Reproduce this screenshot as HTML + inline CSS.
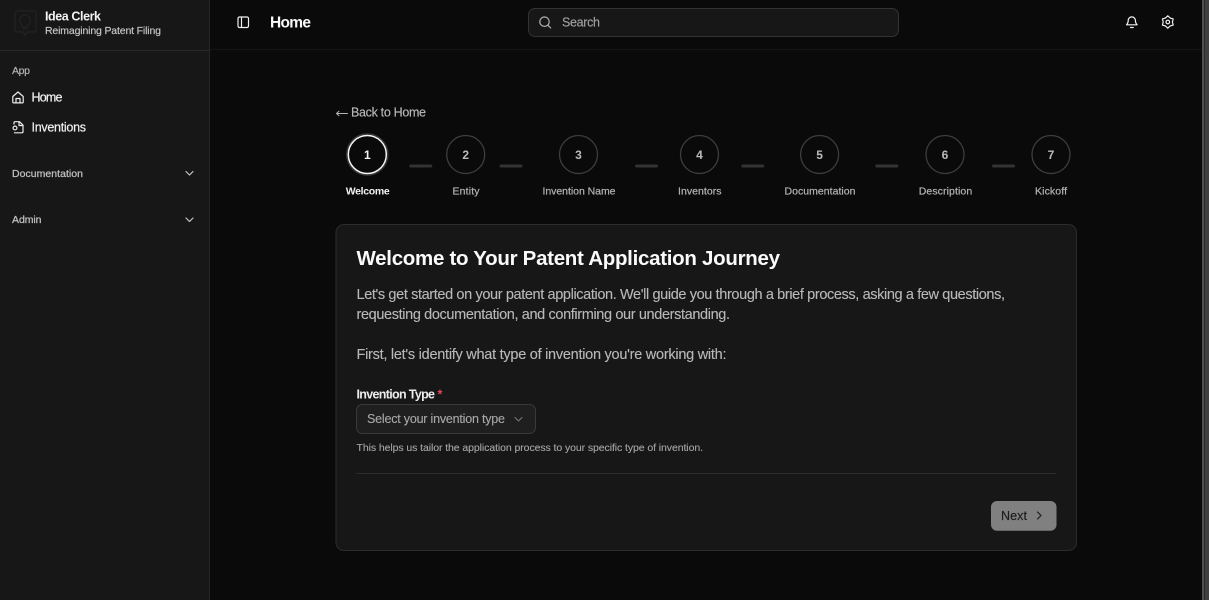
<!DOCTYPE html>
<html><head><meta charset="utf-8"><style>
html,body{margin:0;padding:0;background:#0a0a0a;width:1209px;height:600px;overflow:hidden}
svg{position:absolute;left:0;top:0;display:block}
text{font-family:"Liberation Sans",sans-serif;white-space:pre}
</style></head><body>
<svg width="1209" height="600" viewBox="0 0 1209 600" xmlns="http://www.w3.org/2000/svg">
<rect width="1209" height="600" fill="#0a0a0a"/>
<!-- sidebar -->
<rect x="0" y="0" width="209.500" height="600" fill="#171717"/>
<rect x="209" y="0" width="1" height="600" fill="#262626"/>
<rect x="0" y="50" width="209" height="1" fill="#2a2a2a"/>
<rect x="210" y="49" width="992" height="1" fill="#151515"/>
<!-- scrollbar -->
<rect x="1202" y="0" width="2" height="600" fill="#505050"/>
<rect x="1204" y="0" width="1" height="600" fill="#2a2a2a"/>
<rect x="1205" y="0" width="4" height="600" fill="#404040"/>
<!-- logo -->
<g fill="none" stroke="#232323" stroke-width="1.200">
<path d="M17 11h17a2 2 0 0 1 2 2v17a2 2 0 0 1-2 2H27l-2.500 3-1-3H17a2 2 0 0 1-2-2V13a2 2 0 0 1 2-2z"/>
<path d="M25 15a5.500 5.500 0 0 0-3 10v2h6v-2a5.500 5.500 0 0 0-3-10zM23 29h4"/>
</g>
<text x="45" y="20.500" font-size="12.500" font-weight="700" fill="#f2f2f2" textLength="56">Idea Clerk</text>
<text x="45" y="34" font-size="10.500" fill="#c8c8c8" stroke="#c8c8c8" stroke-width=".15" textLength="116">Reimagining Patent Filing</text>
<text x="12" y="74" font-size="10.500" fill="#b8b8b8" stroke="#b8b8b8" stroke-width=".15" textLength="18">App</text>
<g fill="none" stroke="#ececec" stroke-width="1.200" stroke-linecap="round" stroke-linejoin="round">
<path d="M12.800 96.500L18 92l5.200 4.500V102a.9.9 0 0 1-.9.900H13.700a.9.900 0 0 1-.9-.9z"/>
<path d="M16 102.800v-4.300h4v4.300"/>
<path d="M14 124v-1.300a1 1 0 0 1 1-1h4.500l3.500 3.500v6.600a1 1 0 0 1-1 1h-7.500"/>
<path d="M19 122v3.500h4"/>
<circle cx="15" cy="128" r="1.900"/>
</g>
<text x="31.500" y="101.500" font-size="12.500" fill="#f0f0f0" stroke="#f0f0f0" stroke-width=".2" textLength="31">Home</text>
<text x="31.500" y="131.500" font-size="12.500" fill="#f0f0f0" stroke="#f0f0f0" stroke-width=".2" textLength="54.500">Inventions</text>
<text x="12" y="177" font-size="10.500" fill="#c0c0c0" stroke="#c0c0c0" stroke-width=".25" textLength="71">Documentation</text>
<text x="12" y="223" font-size="10.500" fill="#c0c0c0" stroke="#c0c0c0" stroke-width=".25" textLength="29.500">Admin</text>
<g fill="none" stroke="#c8c8c8" stroke-width="1.200" stroke-linecap="round" stroke-linejoin="round">
<path d="M186 171.500l3.500 3.500 3.500-3.500"/>
<path d="M186 218l3.500 3.500 3.500-3.500"/>
</g>
<!-- header -->
<g fill="none" stroke="#f0f0f0" stroke-width="1.200" stroke-linejoin="round">
<rect x="238" y="17" width="10.500" height="10.500" rx="1.500"/>
<path d="M241.500 17v10.500"/>
</g>
<text x="270" y="27.500" font-size="15.500" font-weight="700" fill="#fafafa" textLength="41">Home</text>
<rect x="528.500" y="8.500" width="370" height="28" rx="6.500" fill="#171717" stroke="#333"/>
<g fill="none" stroke="#b0b0b0" stroke-width="1.200" stroke-linecap="round">
<circle cx="544.500" cy="21.700" r="4.700"/><path d="M548 25.300l2.700 2.700"/>
</g>
<text x="562" y="26.500" font-size="12.500" fill="#a0a0a0" stroke="#a0a0a0" stroke-width=".15" textLength="38">Search</text>
<g fill="none" stroke="#f0f0f0" stroke-width="1.200" stroke-linecap="round" stroke-linejoin="round">
<path d="M1126.500 24.800c1-1 1.700-2 1.700-4.300a3.600 3.600 0 0 1 7.200 0c0 2.300.7 3.300 1.700 4.300z"/>
<path d="M1130.500 27.500h2.700"/>
<path d="M1167.800 15.800l2.300 2.200 3.100.9-.8 3.100.8 3.100-3.100.9-2.300 2.200-2.300-2.200-3.100-.9.8-3.100-.8-3.100 3.100-.9z"/>
<circle cx="1167.800" cy="22" r="1.800"/>
</g>
<!-- back -->
<g fill="none" stroke="#b4b4b4" stroke-width="1" stroke-linecap="round" stroke-linejoin="round">
<path d="M336.500 113.500h11M336.500 113.500l2.500-2.200M336.500 113.500l2.500 2.200"/>
</g>
<text x="351" y="116.500" font-size="12.500" fill="#b8b8b8" stroke="#b8b8b8" stroke-width=".15" textLength="75">Back to Home</text>
<!-- stepper -->
<g fill="none">
<circle cx="367.300" cy="154.500" r="20.500" stroke="#3a3a3a" stroke-width="1.500"/>
<circle cx="367.300" cy="154.500" r="19" stroke="#f4f4f4" stroke-width="1.500"/>
<g stroke="#3d3d3d" stroke-width="1.300">
<circle cx="465.700" cy="154.500" r="19"/>
<circle cx="578.500" cy="154.500" r="19"/>
<circle cx="699.500" cy="154.500" r="19"/>
<circle cx="819.600" cy="154.500" r="19"/>
<circle cx="945" cy="154.500" r="19"/>
<circle cx="1051" cy="154.500" r="19"/>
</g>
</g>
<g fill="#333">
<rect x="409.300" y="164.500" width="23" height="3" rx="1.500"/>
<rect x="499.500" y="164.500" width="23" height="3" rx="1.500"/>
<rect x="635" y="164.500" width="23" height="3" rx="1.500"/>
<rect x="741.300" y="164.500" width="23" height="3" rx="1.500"/>
<rect x="875.300" y="164.500" width="23" height="3" rx="1.500"/>
<rect x="992" y="164.500" width="23" height="3" rx="1.500"/>
</g>
<g font-size="12" font-weight="700" text-anchor="middle" fill="#bcbcbc">
<text x="367.300" y="159" fill="#f5f5f5">1</text>
<text x="465.700" y="159">2</text>
<text x="578.500" y="159">3</text>
<text x="699.500" y="159">4</text>
<text x="819.600" y="159">5</text>
<text x="945" y="159">6</text>
<text x="1051" y="159">7</text>
</g>
<g font-size="10.500" fill="#b4b4b4" stroke="#b4b4b4" stroke-width=".2">
<text x="345.700" y="194.500" font-weight="700" fill="#f2f2f2" stroke="none" textLength="44">Welcome</text>
<text x="452.500" y="194.500" textLength="27">Entity</text>
<text x="542.500" y="194.500" textLength="73">Invention Name</text>
<text x="678" y="194.500" textLength="43.500">Inventors</text>
<text x="784.500" y="194.500" textLength="71">Documentation</text>
<text x="918.700" y="194.500" textLength="53.500">Description</text>
<text x="1035" y="194.500" textLength="32">Kickoff</text>
</g>
<!-- card -->
<rect x="336" y="224.500" width="740.500" height="326" rx="8" fill="#171717" stroke="#2c2c2c"/>
<text x="356.500" y="265" font-size="20.500" font-weight="700" fill="#fafafa" textLength="423.500">Welcome to Your Patent Application Journey</text>
<g font-size="14.500" fill="#b8b8b8" stroke="#b8b8b8" stroke-width=".12">
<text x="356.500" y="299" textLength="648.500">Let's get started on your patent application. We'll guide you through a brief process, asking a few questions,</text>
<text x="356.500" y="319" textLength="373.500">requesting documentation, and confirming our understanding.</text>
<text x="356.500" y="359" textLength="370">First, let's identify what type of invention you're working with:</text>
</g>
<text x="356.500" y="398.500" font-size="12.500" font-weight="700" fill="#ededed" textLength="78.500">Invention Type</text>
<text x="437.500" y="398.500" font-size="12.500" font-weight="700" fill="#e5484d">*</text>
<rect x="356.500" y="404.500" width="179" height="29" rx="6" fill="#1f1f1f" stroke="#3a3a3a"/>
<text x="367" y="423" font-size="12.500" fill="#a8a8a8" stroke="#a8a8a8" stroke-width=".12" textLength="138">Select your invention type</text>
<path d="M515 417.500l3.500 3.500 3.500-3.500" fill="none" stroke="#7a7a7a" stroke-width="1" stroke-linecap="round" stroke-linejoin="round"/>
<text x="356.500" y="451" font-size="10.500" fill="#a4a4a4" stroke="#a4a4a4" stroke-width=".12" textLength="346.500">This helps us tailor the application process to your specific type of invention.</text>
<rect x="356" y="473" width="700" height="1" fill="#2c2c2c"/>
<rect x="991" y="501" width="65.500" height="29.800" rx="6" fill="#808080"/>
<text x="1001" y="520" font-size="12.500" fill="#1c1c1c" stroke="#1c1c1c" stroke-width=".15" textLength="26">Next</text>
<path d="M1037.500 512l3.500 3.500-3.500 3.500" fill="none" stroke="#1c1c1c" stroke-width="1.200" stroke-linecap="round" stroke-linejoin="round"/>
</svg>
</body></html>
